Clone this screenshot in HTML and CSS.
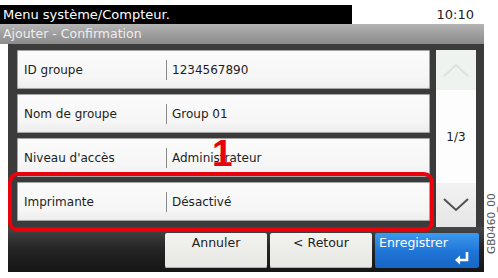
FILE: index.html
```html
<!DOCTYPE html>
<html lang="fr">
<head>
    <meta charset="UTF-8">
    <title>Ajouter - Confirmation</title>
    <link rel="stylesheet" href="styles.css">
</head>
<body>
    <div class="screen">
        <div class="status">
            <div class="title">Menu système/Compteur.</div>
            <div class="clock">10:10</div>
        </div>
        <div class="subtitle">Ajouter - Confirmation</div>

        <div class="panel">
            <div class="main">
                <div class="list">
                    <div class="row"><span class="label">ID groupe</span><span class="value">1234567890</span></div>
                    <div class="row"><span class="label">Nom de groupe</span><span class="value">Group 01</span></div>
                    <div class="row"><span class="label">Niveau d'accès</span><span class="value">Administrateur</span></div>
                    <div class="row"><span class="label">Imprimante</span><span class="value">Désactivé</span></div>
                </div>
                <div class="scroll">
                    <div class="scroll-btn up">
                        <svg width="26" height="14" viewBox="0 0 26 14"><path d="M1 13 L13 2 L25 13" fill="none" stroke="#dbe2dc" stroke-width="2"/></svg>
                    </div>
                    <div class="page">1/3</div>
                    <div class="scroll-btn down">
                        <svg width="26" height="14" viewBox="0 0 26 14"><path d="M1 1 L13 12 L25 1" fill="none" stroke="#505050" stroke-width="2"/></svg>
                    </div>
                </div>
            </div>
            <div class="footer">
                <div class="btn">Annuler</div>
                <div class="btn">&lt; Retour</div>
                <div class="btn primary">
                    Enregistrer
                    <svg class="enter" width="14" height="13" viewBox="0 0 14 13"><path d="M12 0 V8 H4" fill="none" stroke="#fff" stroke-width="2.6"/><path d="M0 8 L5 3.5 V12.5 Z" fill="#fff"/></svg>
                </div>
            </div>
        </div>
    </div>

    <!-- annotation overlays -->
    <div class="callout"></div>
    <div class="callout-num">1</div>
    <div class="ref">GB0460_00</div>
</body>
</html>
```

FILE: styles.css
```css
body {
    margin: 0;
    width: 498px;
    height: 278px;
    background: #fff;
    font-family: "DejaVu Sans", Verdana, sans-serif;
    position: relative;
    overflow: hidden;
}

.screen {
    width: 484px;
    padding-top: 5px;
}

.status {
    display: flex;
    height: 19px;
    line-height: 19px;
}

.title {
    width: 349px;
    padding-left: 3px;
    background: #000;
    color: #fff;
    font-size: 13px;
}

.clock {
    flex: 1;
    text-align: right;
    padding-right: 10px;
    color: #222;
    font-size: 13px;
}

.subtitle {
    height: 20px;
    line-height: 20px;
    padding-left: 3px;
    background: linear-gradient(#b4b4b4, #9a9a9a 60%, #8c8c8c);
    color: #eeeeee;
    font-size: 12.5px;
}

.panel {
    margin-left: 8px;
    height: 228px;
    background: #3b3b3b;
    display: flex;
    flex-direction: column;
}

.main {
    display: flex;
    align-items: flex-start;
    padding-top: 6px;
}

.list {
    width: 413px;
    padding-left: 9px;
    display: flex;
    flex-direction: column;
    gap: 5px;
}

.row {
    height: 39px;
    display: flex;
    align-items: center;
    background: linear-gradient(#fbfbfb, #f6f6f6 70%, #ececec);
    border-radius: 2px;
    box-shadow: inset 0 0 0 1px #a4a4a4;
    font-size: 12px;
    color: #1e1e1e;
}

.label {
    width: 142px;
    padding-left: 7px;
}

.value {
    border-left: 1px solid #8a8a8a;
    padding-left: 5px;
    line-height: 20px;
}

.scroll {
    margin-left: 6px;
    width: 40px;
    height: 177px;
    background: #fdfdfd;
    display: flex;
    flex-direction: column;
}

.scroll-btn {
    display: flex;
    align-items: center;
    justify-content: center;
}

.scroll-btn.up {
    height: 40px;
    background: #eef3ef;
}

.scroll-btn.down {
    height: 44px;
    background: linear-gradient(#f2f2f2, #e6e6e6);
}

.page {
    flex: 1;
    display: flex;
    align-items: center;
    justify-content: center;
    font-size: 12px;
    color: #222;
}

.footer {
    flex: 1;
    display: flex;
    justify-content: flex-end;
    gap: 3px;
    padding: 6px 5px 4px 0;
    background: linear-gradient(#474747, #262626 45%, #151515);
}

.btn {
    width: 102px;
    padding-top: 2px;
    text-align: center;
    font-size: 12.5px;
    color: #222;
    background: linear-gradient(#f3f3f0, #e6e6e2);
    border-radius: 2px;
    box-shadow: inset 0 -1px 0 #b0b0b0;
}

.btn.primary {
    position: relative;
    width: 100px;
    padding-left: 4px;
    text-align: left;
    color: #fff;
    background: linear-gradient(#3d9af0, #1f74d6 55%, #1766c4);
    box-shadow: none;
}

.enter {
    position: absolute;
    right: 10px;
    bottom: 3px;
}

.callout {
    position: absolute;
    left: 8px;
    top: 172px;
    width: 418px;
    height: 52px;
    border: 4px solid #e8000c;
    border-radius: 10px;
}

.callout-num {
    position: absolute;
    left: 212px;
    top: 134px;
    font-family: "Liberation Sans", Arial, sans-serif;
    font-size: 37px;
    font-weight: bold;
    line-height: 40px;
    color: #e8000c;
}

.ref {
    position: absolute;
    left: 485px;
    top: 186px;
    height: 76px;
    writing-mode: vertical-rl;
    transform: rotate(180deg);
    font-size: 10.5px;
    color: #555;
    text-align: center;
}
```
